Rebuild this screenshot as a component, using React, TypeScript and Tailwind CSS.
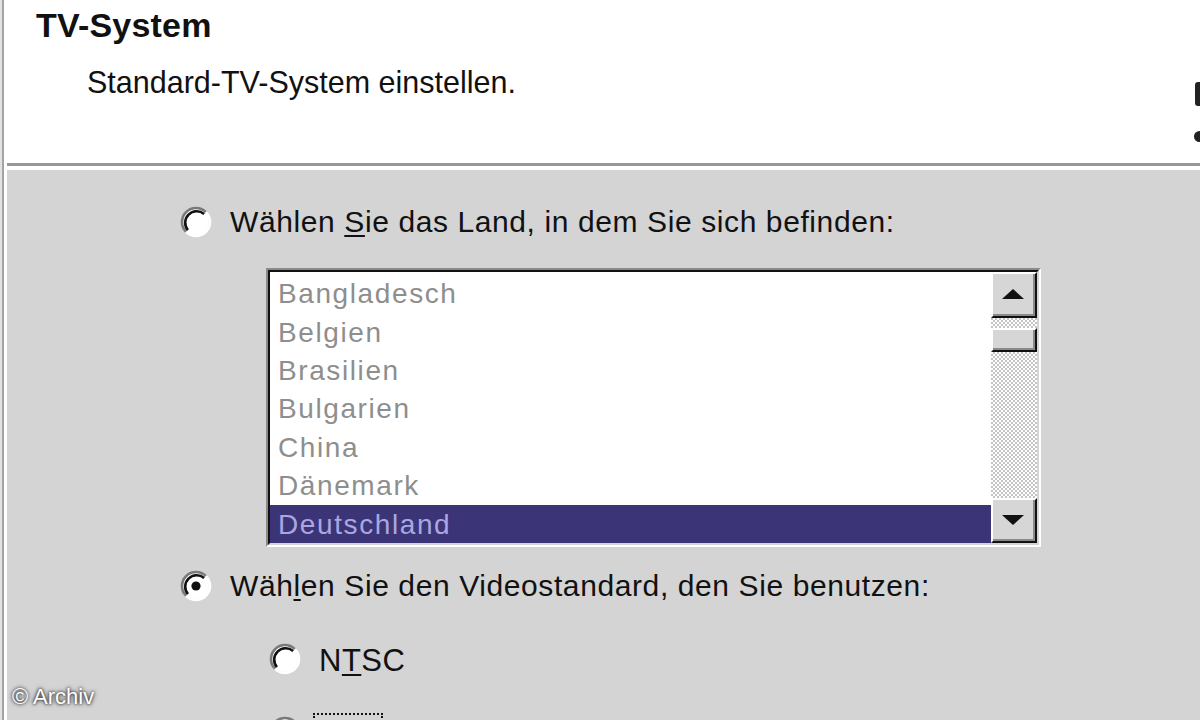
import React from "react";

function Radio({ checked = false }: { checked?: boolean }) {
  return (
    <svg width="32" height="32" viewBox="0 0 32 32" className="shrink-0">
      <circle cx="16" cy="16" r="13" fill="#ffffff" />
      <path d="M 25.9 6.1 A 14 14 0 0 0 6.1 25.9" fill="none" stroke="#7a7a7a" strokeWidth="2.6" />
      <path d="M 24.1 7.9 A 11.5 11.5 0 0 0 7.9 24.1" fill="none" stroke="#111111" strokeWidth="2.6" />
      <path d="M 25.9 6.1 A 14 14 0 0 1 6.1 25.9" fill="none" stroke="#ffffff" strokeWidth="2.6" />
      {checked && <circle cx="16" cy="16" r="4.6" fill="#111111" />}
    </svg>
  );
}

function RaisedButton({ children, className = "" }: { children?: React.ReactNode; className?: string }) {
  return (
    <div className={"border-t-2 border-l-2 border-t-white border-l-white border-r-2 border-b-2 border-r-[#111] border-b-[#111] " + className}>
      <div className="w-full h-full border-r-2 border-b-2 border-r-[#8a8a8a] border-b-[#8a8a8a] bg-[#d6d6d6] flex items-center justify-center">
        {children}
      </div>
    </div>
  );
}

const items = ["Bangladesch", "Belgien", "Brasilien", "Bulgarien", "China", "Dänemark", "Deutschland"];

export default function App() {
  return (
    <div className="w-[1200px] h-[720px] overflow-hidden relative flex bg-[#d4d4d4] font-['Liberation_Sans',Arial,sans-serif] text-[#111]">
      {/* left edge */}
      <div className="w-[2px] h-full bg-[#e2e2e2]" />
      <div className="w-[2px] h-full bg-[#a3a3a3]" />
      <div className="w-[3px] h-full bg-white" />

      <div className="flex-1 flex flex-col">
        {/* header */}
        <div className="h-[163px] bg-white relative pl-[29px] pt-[8px] shrink-0">
          <div className="text-[34px] leading-none font-bold tracking-[0.2px]">TV-System</div>
          <div className="ml-[51px] mt-[25px] text-[30.5px] leading-none">Standard-TV-System einstellen.</div>
          <div className="absolute right-0 top-[82px] w-[5px] h-[24px] bg-[#222] rounded-l-[3px]" />
          <div className="absolute right-0 top-[131px] w-[6px] h-[11px] bg-[#222] rounded-l-full" />
        </div>
        <div className="h-[3px] bg-[#979797] shrink-0" />
        <div className="h-[4px] bg-white shrink-0" />

        {/* content */}
        <div className="pl-[173px] pt-[36px] flex flex-col items-start">
          <div className="flex items-center h-[32px] gap-[18px]">
            <Radio />
            <span className="text-[30px] leading-none tracking-[0.6px]">
              Wählen <span className="underline decoration-2 underline-offset-[3px]">S</span>ie das Land, in dem Sie sich befinden:
            </span>
          </div>

          {/* listbox */}
          <div className="ml-[86px] mt-[30px] w-[775px] h-[279px] border-t-2 border-l-2 border-t-[#8a8a8a] border-l-[#8a8a8a] border-r-2 border-b-2 border-r-white border-b-white">
            <div className="w-full h-full border-t-2 border-l-2 border-t-[#111] border-l-[#111] border-r-2 border-b-2 border-r-[#d4d4d4] border-b-[#d4d4d4] flex">
              <div className="flex-1 bg-white overflow-hidden pt-[3px]">
                {items.map((it, i) => {
                  const sel = i === items.length - 1;
                  return (
                    <div
                      key={it}
                      className={
                        "h-[38.4px] flex items-center pl-[8px] text-[28px] leading-none tracking-[1.6px] " +
                        (sel ? "bg-[#3b3577] text-[#aaa6e2]" : "text-[#8e8e8e]")
                      }
                    >
                      {it}
                    </div>
                  );
                })}
              </div>
              {/* scrollbar */}
              <div className="w-[46px] flex flex-col">
                <RaisedButton className="h-[46px]">
                  <svg width="24" height="12" viewBox="0 0 24 12">
                    <path d="M12 1 L23 11 L1 11 Z" fill="#111" />
                  </svg>
                </RaisedButton>
                <div className="h-[180px] flex flex-col bg-[repeating-conic-gradient(#ffffff_0%_25%,#c4c4c4_0%_50%)] bg-[length:4px_4px]">
                  <RaisedButton className="mt-[10px] h-[24px]" />
                </div>
                <RaisedButton className="flex-1">
                  <svg width="24" height="12" viewBox="0 0 24 12">
                    <path d="M1 1 L23 1 L12 11 Z" fill="#111" />
                  </svg>
                </RaisedButton>
              </div>
            </div>
          </div>

          <div className="flex items-center h-[32px] gap-[18px] mt-[23px]">
            <Radio checked />
            <span className="text-[30px] leading-none tracking-[0.6px]">
              Wäh<span className="underline decoration-2 underline-offset-[3px]">l</span>en Sie den Videostandard, den Sie benutzen:
            </span>
          </div>

          <div className="flex items-center h-[32px] gap-[18px] mt-[41px] ml-[89px]">
            <Radio />
            <span className="text-[31px] leading-none tracking-[0.5px] pt-[3px]">
              N<span className="underline decoration-2 underline-offset-[3px]">T</span>SC
            </span>
          </div>

          <div className="flex items-start gap-[12px] mt-[38px] ml-[89px]">
            <div className="pt-[3px]">
              <Radio checked />
            </div>
            <span className="text-[31px] leading-none tracking-[0.5px] px-[4px] pt-[10px] pb-[4px] border-2 border-dotted border-[#111]">
              PAL
            </span>
          </div>
        </div>
      </div>

      <div className="absolute left-[12px] top-[686px] text-[22px] leading-none text-white [text-shadow:0_0_3px_rgba(0,0,0,0.9),0_0_5px_rgba(0,0,0,0.6)]">
        © Archiv
      </div>
    </div>
  );
}
